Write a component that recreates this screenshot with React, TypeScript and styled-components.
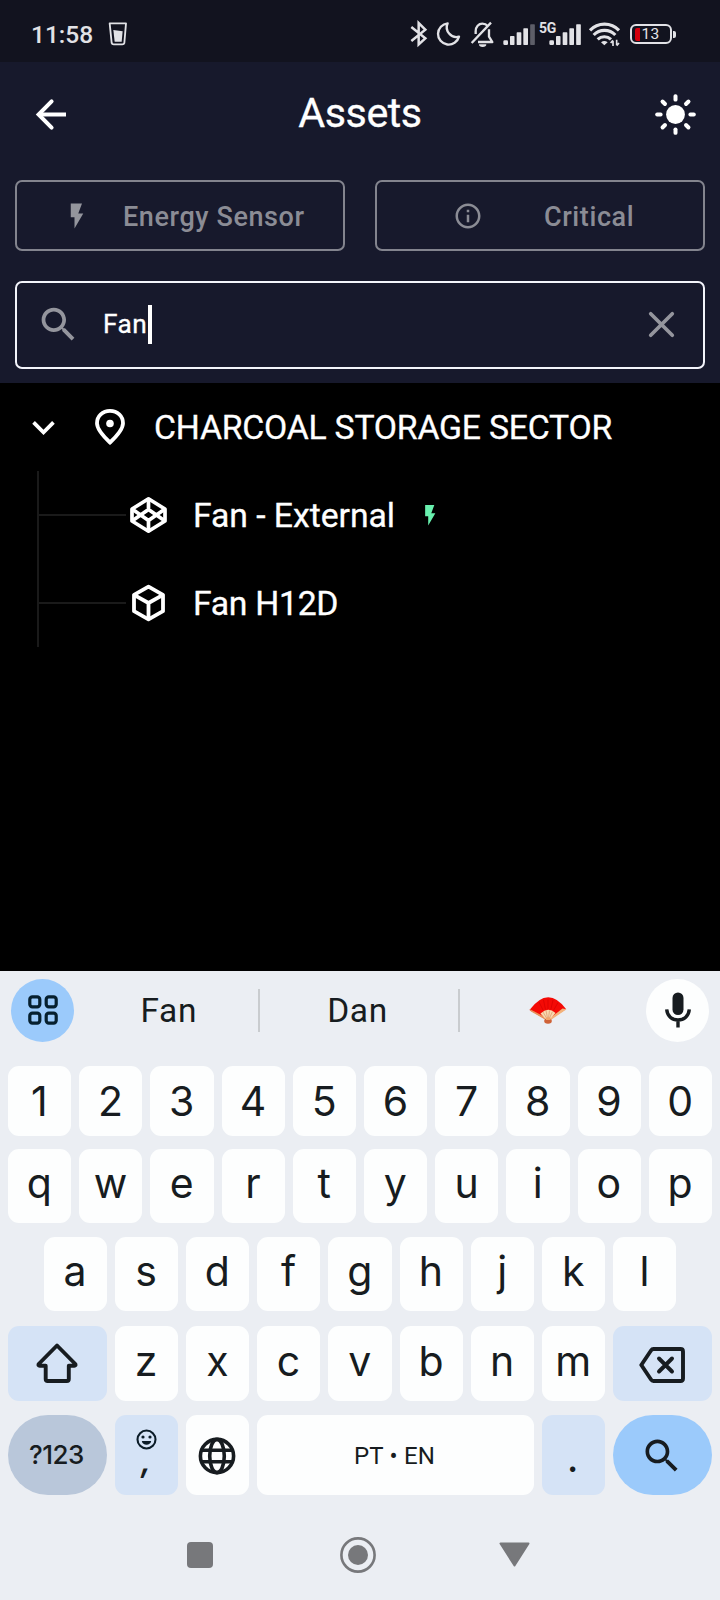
import React from "react";
import styled, { createGlobalStyle } from "styled-components";

const Global = createGlobalStyle`
  * { box-sizing: border-box; }
  body { margin: 0; background: #000; font-family: Roboto, sans-serif; }
  svg { display: block; flex: none; }
`;

const Screen = styled.div`
  width: 720px;
  height: 1600px;
  display: flex;
  flex-direction: column;
  overflow: hidden;
  background: #000;
  color: #fff;
`;

/* Status bar */

const StatusBar = styled.div`
  height: 62px;
  display: flex;
  align-items: flex-start;
  justify-content: space-between;
  padding: 20px 44px 0 31px;
  background: #12131f;
  color: #e2e2e6;
`;

const StatusGroup = styled.div`
  display: flex;
  align-items: flex-start;
`;

const Clock = styled.span`
  width: 77px;
  font-size: 24.5px;
  font-weight: 500;
  line-height: 29px;
`;

const StatusSlot = styled.div<{ $before?: number }>`
  margin-left: ${(p) => p.$before ?? 0}px;
`;

const NetworkLabel = styled.span`
  margin-left: 3px;
  width: 10px;
  font-size: 14px;
  font-weight: 700;
  line-height: 16px;
  letter-spacing: -0.3px;
  white-space: nowrap;
`;

const Battery = styled.div`
  width: 42px;
  height: 20px;
  margin: 4px 0 0 8px;
  padding: 0 2.5px;
  display: flex;
  align-items: center;
  border: 2px solid #e2e2e6;
  border-radius: 6px;
  font-size: 15.5px;
  letter-spacing: 0.2px;
  line-height: 16px;
`;

const BatteryLevel = styled.span`
  width: 5px;
  height: 13px;
  margin-right: 2px;
  border-radius: 2px 0 0 2px;
  background: #d4000d;
`;

const BatteryTip = styled.span`
  width: 3px;
  height: 7px;
  margin: 10.5px 0 0 1px;
  border-radius: 0 2px 2px 0;
  background: #e2e2e6;
`;

/* Header */

const Header = styled.header`
  height: 321px;
  padding: 0 15px;
  background: #17192c;
`;

const AppBar = styled.div`
  height: 104px;
  padding: 0 7px 0 14px;
  display: grid;
  grid-template-columns: 45px 1fr 45px;
  align-items: center;
`;

const Title = styled.h1`
  margin: 0 7px 2px 0;
  text-align: center;
  font-size: 41.25px;
  font-weight: 400;
  line-height: 48px;
  letter-spacing: -0.45px;
  -webkit-text-stroke: 0.3px #fff;
`;

const Filters = styled.div`
  display: grid;
  grid-template-columns: 1fr 1fr;
  gap: 30px;
  margin-top: 14px;
`;

const FilterButton = styled.button<{ $lead: number; $gap: number }>`
  height: 71px;
  padding: 0 0 0 ${(p) => p.$lead}px;
  display: flex;
  align-items: center;
  gap: ${(p) => p.$gap}px;
  background: transparent;
  border: 2px solid #83848e;
  border-radius: 7px;
  color: #8b8c95;
  font: 500 27px/32px Roboto, sans-serif;
  letter-spacing: 0.6px;
  white-space: nowrap;
`;

const FilterLabel = styled.span`
  padding-top: 2px;
`;

const SearchField = styled.div`
  height: 88px;
  margin-top: 30px;
  padding: 0 19px 2px;
  display: flex;
  align-items: center;
  border: 2px solid #f3f4fb;
  border-radius: 7px;
  color: #94959d;
`;

const Query = styled.span`
  margin-left: 22px;
  color: #fff;
  font-size: 26.25px;
  line-height: 32px;
  letter-spacing: 0.4px;
  -webkit-text-stroke: 0.3px #fff;
`;

const Caret = styled.span`
  width: 4px;
  height: 39px;
  margin-left: 1px;
  margin-right: auto;
  background: #fff;
`;

/* Asset tree */

const Tree = styled.main`
  height: 587.5px;
  font-size: 33.75px;
  line-height: 40px;
  letter-spacing: -0.22px;
  white-space: nowrap;
  -webkit-text-stroke: 0.3px #fff;
`;

const LocationRow = styled.div`
  height: 88px;
  padding-left: 21px;
  display: flex;
  align-items: center;
`;

const LocationName = styled.span`
  margin-left: 28px;
  padding-top: 2px;
`;

const Children = styled.div`
  margin-left: 37px;
  border-left: 2px solid #1a1a1a;
`;

const AssetRow = styled.div`
  height: 88px;
  display: flex;
  align-items: center;
`;

const Branch = styled.span`
  width: 87px;
  height: 2px;
  margin-right: 3px;
  background: #1a1a1a;
`;

const AssetName = styled.span<{ $spacing?: number }>`
  margin: 0 23px 0 25px;
  padding-top: 2px;
  letter-spacing: ${(p) => p.$spacing ?? 0}px;
`;

/* Keyboard */

const Keyboard = styled.section`
  flex: 1;
  background: #ebeef3;
  color: #171c20;
  font-family: Inter, Roboto, sans-serif;
`;

const Suggestions = styled.div`
  height: 79.5px;
  padding: 0 11px;
  display: flex;
  align-items: center;
`;

const RoundButton = styled.button<{ $bg: string }>`
  width: 63px;
  height: 63px;
  padding: 0;
  border: 0;
  border-radius: 50%;
  display: grid;
  place-items: center;
  background: ${(p) => p.$bg};
`;

const Suggestion = styled.div<{ $w?: number; $padLeft?: number; $padRight?: number }>`
  ${(p) => (p.$w ? `width: ${p.$w}px;` : "flex: 1;")}
  display: flex;
  justify-content: center;
  padding: 2px ${(p) => p.$padRight ?? 0}px 0 ${(p) => p.$padLeft ?? 0}px;
  font-family: Roboto, sans-serif;
  font-size: 33.5px;
  line-height: 40px;
  letter-spacing: 0.6px;
`;

const Divider = styled.span`
  width: 2px;
  height: 43px;
  background: #c9cccf;
`;

const KeyRow = styled.div<{ $top: number; $h: number }>`
  height: ${(p) => p.$h}px;
  margin-top: ${(p) => p.$top}px;
  padding: 0 8px;
  display: flex;
  justify-content: center;
  gap: 8px;
`;

const tones = {
  plain: "#fdfefe",
  tint: "#d5e3f6",
  dim: "#b9c7da",
  accent: "#9bcafb",
};

const Key = styled.button<{
  $w?: number;
  $tone?: keyof typeof tones;
  $round?: boolean;
  $top?: number;
  $lift?: number;
  $nudge?: number;
}>`
  ${(p) => (p.$w === 0 ? "flex: 1;" : `width: ${p.$w ?? 63.2}px;`)}
  height: 100%;
  padding: ${(p) => p.$top ?? 0}px ${(p) => p.$nudge ?? 0.5}px ${(p) => p.$lift ?? 0}px 0;
  border: 0;
  border-radius: ${(p) => (p.$round ? 40 : 11)}px;
  display: flex;
  flex-direction: column;
  align-items: center;
  justify-content: center;
  background: ${(p) => tones[p.$tone ?? "plain"]};
  color: #171c20;
  font-family: Inter, Roboto, sans-serif;
  font-size: 41px;
  font-weight: 400;
  line-height: 48px;
`;

const ModeLabel = styled.span`
  font-size: 26px;
  font-weight: 500;
  letter-spacing: -0.5px;
`;

const SpaceLabel = styled.span`
  font-family: Roboto, sans-serif;
  font-size: 24px;
  letter-spacing: 0.2px;
`;

const Comma = styled.span`
  margin-top: -5px;
  font: italic 600 32px/32px Inter, sans-serif;
`;

const NavBar = styled.nav`
  height: 104px;
  padding: 15px 190px 0 187px;
  display: flex;
  align-items: center;
  justify-content: space-between;
`;

/* Icons */

const Bars = ({ dimLast }: { dimLast?: boolean }) => (
  <svg width="33" height="28" viewBox="0 0 99 84" fill="#e2e2e6">
    <rect x="1" y="61" width="14" height="14" rx="4" />
    <rect x="21" y="48" width="13.500" height="27" rx="2" />
    <rect x="41" y="37" width="14" height="38" rx="2" />
    <rect x="61" y="25" width="14" height="50" rx="2" />
    <rect x="81.500" y="13" width="14" height="62" rx="2" fill={dimLast ? "#5d5e68" : "#e2e2e6"} />
  </svg>
);

const CupIcon = () => (
  <svg width="20" height="28" viewBox="0 0 60 84" fill="none" stroke="#e2e2e6" strokeWidth="5.500" strokeLinejoin="round">
    <path d="M5 10H54L49 69Q48 73 43 73H17Q12 73 11 69Z" />
    <path d="M16 30L44 34L41 65H20Z" fill="#e2e2e6" stroke="none" />
  </svg>
);

const BluetoothIcon = () => (
  <svg width="19" height="28" viewBox="0 0 57 84" fill="none" stroke="#e2e2e6" strokeWidth="7.500">
    <path d="M7 21L49 55L29 73V9L49 29L7 63" />
  </svg>
);

const MoonIcon = () => (
  <svg width="25" height="28" viewBox="0 0 75 84" fill="none" stroke="#e2e2e6" strokeWidth="7" strokeLinejoin="round">
    <path d="M35 10A32 32 0 1 0 69 50A29 29 0 0 1 35 10Z" />
  </svg>
);

const BellOffIcon = () => (
  <svg width="27" height="28" viewBox="0 0 81 84" fill="none" stroke="#e2e2e6" strokeWidth="7" strokeLinejoin="round">
    <path d="M20 42V34C20 20 29 11 40 11C47 11 52 13 56 18M60 28V50L70 66H27M66 8L8 69" />
    <path d="M30 73H52A11 8 0 0 1 30 73Z" fill="#e2e2e6" stroke="none" />
  </svg>
);

const WifiIcon = () => (
  <svg width="34" height="28" viewBox="0 0 102 84" fill="none" stroke="#e2e2e6" strokeWidth="9.500">
    <path d="M6 31A60 60 0 0 1 93 31M17 45A45 45 0 0 1 82 45M29 58A30 30 0 0 1 69 58" />
    <path d="M39 67Q49 59 59 67L49 76Z" fill="#e2e2e6" stroke="none" />
    <path d="M75 78V62M68 69L75 61M86 59V76M93 69L86 77" strokeWidth="5" />
  </svg>
);

const BackIcon = () => (
  <svg width="45" height="45" viewBox="0 0 45 45" fill="none" stroke="#fff" strokeWidth="4">
    <path d="M37 22.500H10" />
    <path d="M22.600 9.400L9.600 22.500L22.600 35.600" strokeLinecap="round" />
  </svg>
);

const SunIcon = () => (
  <svg width="45" height="45" viewBox="-22.5 -22.5 45 45" fill="#fff">
    <circle r="9.400" />
    {[0, 45, 90, 135, 180, 225, 270, 315].map((a) => (
      <rect key={a} x="-2" y="-20.300" width="4" height="7.400" rx="1.900" transform={`rotate(${a})`} />
    ))}
  </svg>
);

const BoltIcon = ({ size, color }: { size: number; color: string }) => (
  <svg width={size} height={size} viewBox="0 0 24 24" fill={color}>
    <path d="M7 2v11h3v9l7-12h-4l3-8z" />
  </svg>
);

const InfoIcon = () => (
  <svg width="30" height="30" viewBox="0 0 24 24" fill="currentColor">
    <path d="M11 7h2v2h-2zm0 4h2v6h-2zm1-9C6.48 2 2 6.48 2 12s4.48 10 10 10 10-4.48 10-10S17.52 2 12 2zm0 18c-4.41 0-8-3.59-8-8s3.59-8 8-8 8 3.59 8 8-3.59 8-8 8z" />
  </svg>
);

const SearchIcon = ({ size }: { size: number }) => (
  <svg width={size} height={size} viewBox="0 0 24 24" fill="currentColor">
    <path d="M15.5 14h-.79l-.28-.27C15.41 12.59 16 11.11 16 9.5 16 5.91 13.09 3 9.5 3S3 5.91 3 9.5 5.91 16 9.5 16c1.61 0 3.09-.59 4.23-1.57l.27.28v.79l5 4.99L20.49 19l-4.99-5zm-6 0C7.01 14 5 11.99 5 9.5S7.01 5 9.5 5 14 7.01 14 9.5 11.99 14 9.5 14z" />
  </svg>
);

const CloseIcon = () => (
  <svg width="45" height="45" viewBox="0 0 45 45" stroke="currentColor" strokeWidth="3.700" strokeLinecap="round">
    <path d="M11.700 11.700L33.300 33.300M33.300 11.700L11.700 33.300" />
  </svg>
);

const ChevronIcon = () => (
  <svg width="45" height="45" viewBox="0 0 24 24" fill="#fff">
    <path d="M16.59 8.59L12 13.17 7.41 8.59 6 10l6 6 6-6z" />
  </svg>
);

const PinIcon = () => (
  <svg width="32" height="38" viewBox="0 0 32 38" fill="none">
    <path d="M16 34.500C8.500 27.500 3 21 3 15.300C3 8 8.600 2.900 16 2.900S29 8 29 15.300C29 21 23.500 27.500 16 34.500Z" stroke="#fff" strokeWidth="3.800" />
    <circle cx="16" cy="15.500" r="3.800" fill="#fff" />
  </svg>
);

const ComponentIcon = () => (
  <svg width="39" height="38" viewBox="0 0 39 38" fill="none" stroke="#fff" strokeWidth="3.700" strokeLinejoin="round">
    <path d="M19.500 2.800L36 13V25L19.500 35.200L3 25V13Z" />
    <path d="M3 13L19.500 24.500L36 13M3 25L19.500 13.500L36 25M19.500 2.800V13.500M19.500 24.500V35.200" />
  </svg>
);

const CubeIcon = () => (
  <svg width="39" height="38" viewBox="0 0 39 38" fill="none" stroke="#fff" strokeWidth="3.800" strokeLinejoin="round">
    <path d="M19.500 2.600L34 10.800V27.200L19.500 35.400L5 27.200V10.800Z" />
    <path d="M5 10.800L19.500 19L34 10.800M19.500 19V35.400" />
  </svg>
);

const GridIcon = () => (
  <svg width="30" height="30" viewBox="0 0 30 30" fill="none" stroke="#06202f" strokeWidth="3.200">
    {[
      [1.8, 1.8],
      [18.2, 1.8],
      [1.8, 18.2],
      [18.2, 18.2],
    ].map(([x, y]) => (
      <rect key={`${x}-${y}`} x={x} y={y} width="10" height="10" rx="2.600" />
    ))}
  </svg>
);

const FanIcon = () => (
  <svg width="38" height="28" viewBox="0 0 38 28">
    <path d="M0.500 13Q19 -12 37 12L20.500 23H17.500Z" fill="#f40a05" />
    <path d="M33.500 11.500L37.600 12.200L21 23.500H18Z" fill="#f3b27a" />
    <path d="M0.500 12L2 14.500L17 23L18 21Z" fill="#e8935c" />
    <path d="M11.500 16.500Q19 9.500 26.500 16L20.500 23H17.500Z" fill="#f8d9ae" />
    <path d="M14 15L18 22M17 13.500L18.700 22M20.500 13.500L19.400 22M23.500 14.500L20 22" stroke="#e09a74" strokeWidth=".8" />
    <path d="M10 5L14 13M14.500 3L16.500 12.500M19 2.500V12M24 3L21.800 12.500M29 5.500L24.500 13.500" stroke="#d50000" strokeWidth=".7" />
    <ellipse cx="19" cy="24" rx="3.800" ry="2.800" fill="#cf6236" />
    <path d="M17 20.500H21.500V23H17Z" fill="#f0a56b" />
  </svg>
);

const MicIcon = () => (
  <svg width="28" height="36" viewBox="0 0 28 36" fill="none" stroke="#171c20" strokeWidth="3.400">
    <rect x="8.500" y="0.500" width="11" height="22.500" rx="5.500" fill="#171c20" stroke="none" />
    <path d="M2.700 17.300C3.200 24 8 28 14 28S24.800 24 25.300 17.300M14 28V35.500" />
  </svg>
);

const ShiftIcon = () => (
  <svg width="42" height="40" viewBox="0 0 42 40" fill="none" stroke="#171c20" strokeWidth="3.900" strokeLinejoin="round">
    <path d="M21 2.500L39.300 21Q40 22.800 38.300 22.800H32.800V36Q32.800 38 30.800 38H11.700Q9.700 38 9.700 36V22.800H3.700Q2 22.800 2.700 21Z" />
  </svg>
);

const BackspaceIcon = () => (
  <svg width="46" height="38" viewBox="0 0 46 38" fill="none" stroke="#171c20" strokeWidth="3.900" strokeLinejoin="round">
    <path d="M14.500 3H41.500Q44 3 44 5.500V32.500Q44 35 41.500 35H14.500Q13 35 12 33.500L2.300 19L12 4.500Q13 3 14.500 3Z" />
    <path d="M20 12.500L33 25.500M33 12.500L20 25.500" strokeLinecap="round" />
  </svg>
);

const SmileIcon = () => (
  <svg width="21" height="21" viewBox="0 0 21 21" fill="none">
    <circle cx="10.500" cy="10.500" r="9" stroke="#0b1c28" strokeWidth="2.100" />
    <circle cx="7" cy="8" r="1.600" fill="#0b1c28" />
    <circle cx="14" cy="8" r="1.600" fill="#0b1c28" />
    <path d="M5.800 12H15.200C14.500 17 6.500 17 5.800 12Z" fill="#0b1c28" />
  </svg>
);

const GlobeIcon = () => (
  <svg width="38" height="38" viewBox="0 0 38 38" fill="none" stroke="#171c20" strokeWidth="3.600">
    <circle cx="19" cy="19" r="16.600" />
    <ellipse cx="19" cy="19" rx="7.300" ry="16.600" />
    <path d="M3.500 13.200H34.500M3.500 24.800H34.500" />
  </svg>
);

const letters = (s: string) => s.split("").map((c) => (
  <Key key={c} $lift={6}>{c}</Key>
));

export default function App() {
  return (
    <Screen>
      <Global />
      <StatusBar>
        <StatusGroup>
          <Clock>11:58</Clock>
          <CupIcon />
        </StatusGroup>
        <StatusGroup>
          <BluetoothIcon />
          <StatusSlot $before={8}><MoonIcon /></StatusSlot>
          <StatusSlot $before={8}><BellOffIcon /></StatusSlot>
          <StatusSlot $before={7}><Bars dimLast /></StatusSlot>
          <NetworkLabel>5G</NetworkLabel>
          <StatusSlot><Bars /></StatusSlot>
          <StatusSlot $before={6}><WifiIcon /></StatusSlot>
          <Battery>
            <BatteryLevel />
            13
          </Battery>
          <BatteryTip />
        </StatusGroup>
      </StatusBar>

      <Header>
        <AppBar>
          <BackIcon />
          <Title>Assets</Title>
          <SunIcon />
        </AppBar>
        <Filters>
          <FilterButton $lead={45} $gap={31}>
            <BoltIcon size={30} color="#94959d" />
            <FilterLabel>Energy Sensor</FilterLabel>
          </FilterButton>
          <FilterButton $lead={75.5} $gap={61.5}>
            <InfoIcon />
            <FilterLabel>Critical</FilterLabel>
          </FilterButton>
        </Filters>
        <SearchField>
          <SearchIcon size={45} />
          <Query>Fan</Query>
          <Caret />
          <CloseIcon />
        </SearchField>
      </Header>

      <Tree>
        <LocationRow>
          <ChevronIcon />
          <StatusSlot $before={28}><PinIcon /></StatusSlot>
          <LocationName>CHARCOAL STORAGE SECTOR</LocationName>
        </LocationRow>
        <Children>
          <AssetRow>
            <Branch />
            <ComponentIcon />
            <AssetName $spacing={-0.05}>Fan - External</AssetName>
            <BoltIcon size={24.5} color="#69f0ae" />
          </AssetRow>
          <AssetRow>
            <Branch />
            <CubeIcon />
            <AssetName $spacing={-0.3}>Fan H12D</AssetName>
          </AssetRow>
        </Children>
      </Tree>

      <Keyboard>
        <Suggestions>
          <RoundButton $bg={tones.accent}><GridIcon /></RoundButton>
          <Suggestion $w={183.5} $padLeft={6}>Fan</Suggestion>
          <Divider />
          <Suggestion $w={198} $padRight={2}>Dan</Suggestion>
          <Divider />
          <Suggestion $padRight={9}><FanIcon /></Suggestion>
          <RoundButton $bg={tones.plain}><MicIcon /></RoundButton>
        </Suggestions>
        <KeyRow $top={16} $h={70}>
          {"1234567890".split("").map((d) => (
            <Key key={d}>{d}</Key>
          ))}
        </KeyRow>
        <KeyRow $top={13} $h={74}>{letters("qwertyuiop")}</KeyRow>
        <KeyRow $top={14} $h={74}>{letters("asdfghjkl")}</KeyRow>
        <KeyRow $top={15} $h={75}>
          <Key $w={98.8} $tone="tint" $lift={1}><ShiftIcon /></Key>
          {letters("zxcvbnm")}
          <Key $w={98.8} $tone="tint" $top={2} $nudge={2}><BackspaceIcon /></Key>
        </KeyRow>
        <KeyRow $top={14} $h={80}>
          <Key $w={98.8} $tone="dim" $round $nudge={2}><ModeLabel>?123</ModeLabel></Key>
          <Key $tone="tint" $lift={5}>
            <SmileIcon />
            <Comma>,</Comma>
          </Key>
          <Key $nudge={2} $top={1}><GlobeIcon /></Key>
          <Key $w={0} $top={2} $nudge={2}><SpaceLabel>PT • EN</SpaceLabel></Key>
          <Key $tone="tint" $nudge={2} $top={3}>.</Key>
          <Key $w={98.8} $tone="accent" $round $nudge={1} $top={1}><SearchIcon size={44} /></Key>
        </KeyRow>
        <NavBar>
          <svg width="26" height="26" viewBox="0 0 26 26" fill="#77787b">
            <rect width="26" height="26" rx="4" />
          </svg>
          <StatusSlot $before={3}>
            <svg width="36" height="36" viewBox="0 0 36 36" fill="none">
              <circle cx="18" cy="18" r="16.600" stroke="#77787b" strokeWidth="2.600" />
              <circle cx="18" cy="18" r="10" fill="#77787b" />
            </svg>
          </StatusSlot>
          <svg width="31" height="25" viewBox="0 0 31 25" fill="#77787b" stroke="#77787b" strokeWidth="2" strokeLinejoin="round">
            <path d="M1.500 1.500H29.500L15.500 23.500Z" />
          </svg>
        </NavBar>
      </Keyboard>
    </Screen>
  );
}
